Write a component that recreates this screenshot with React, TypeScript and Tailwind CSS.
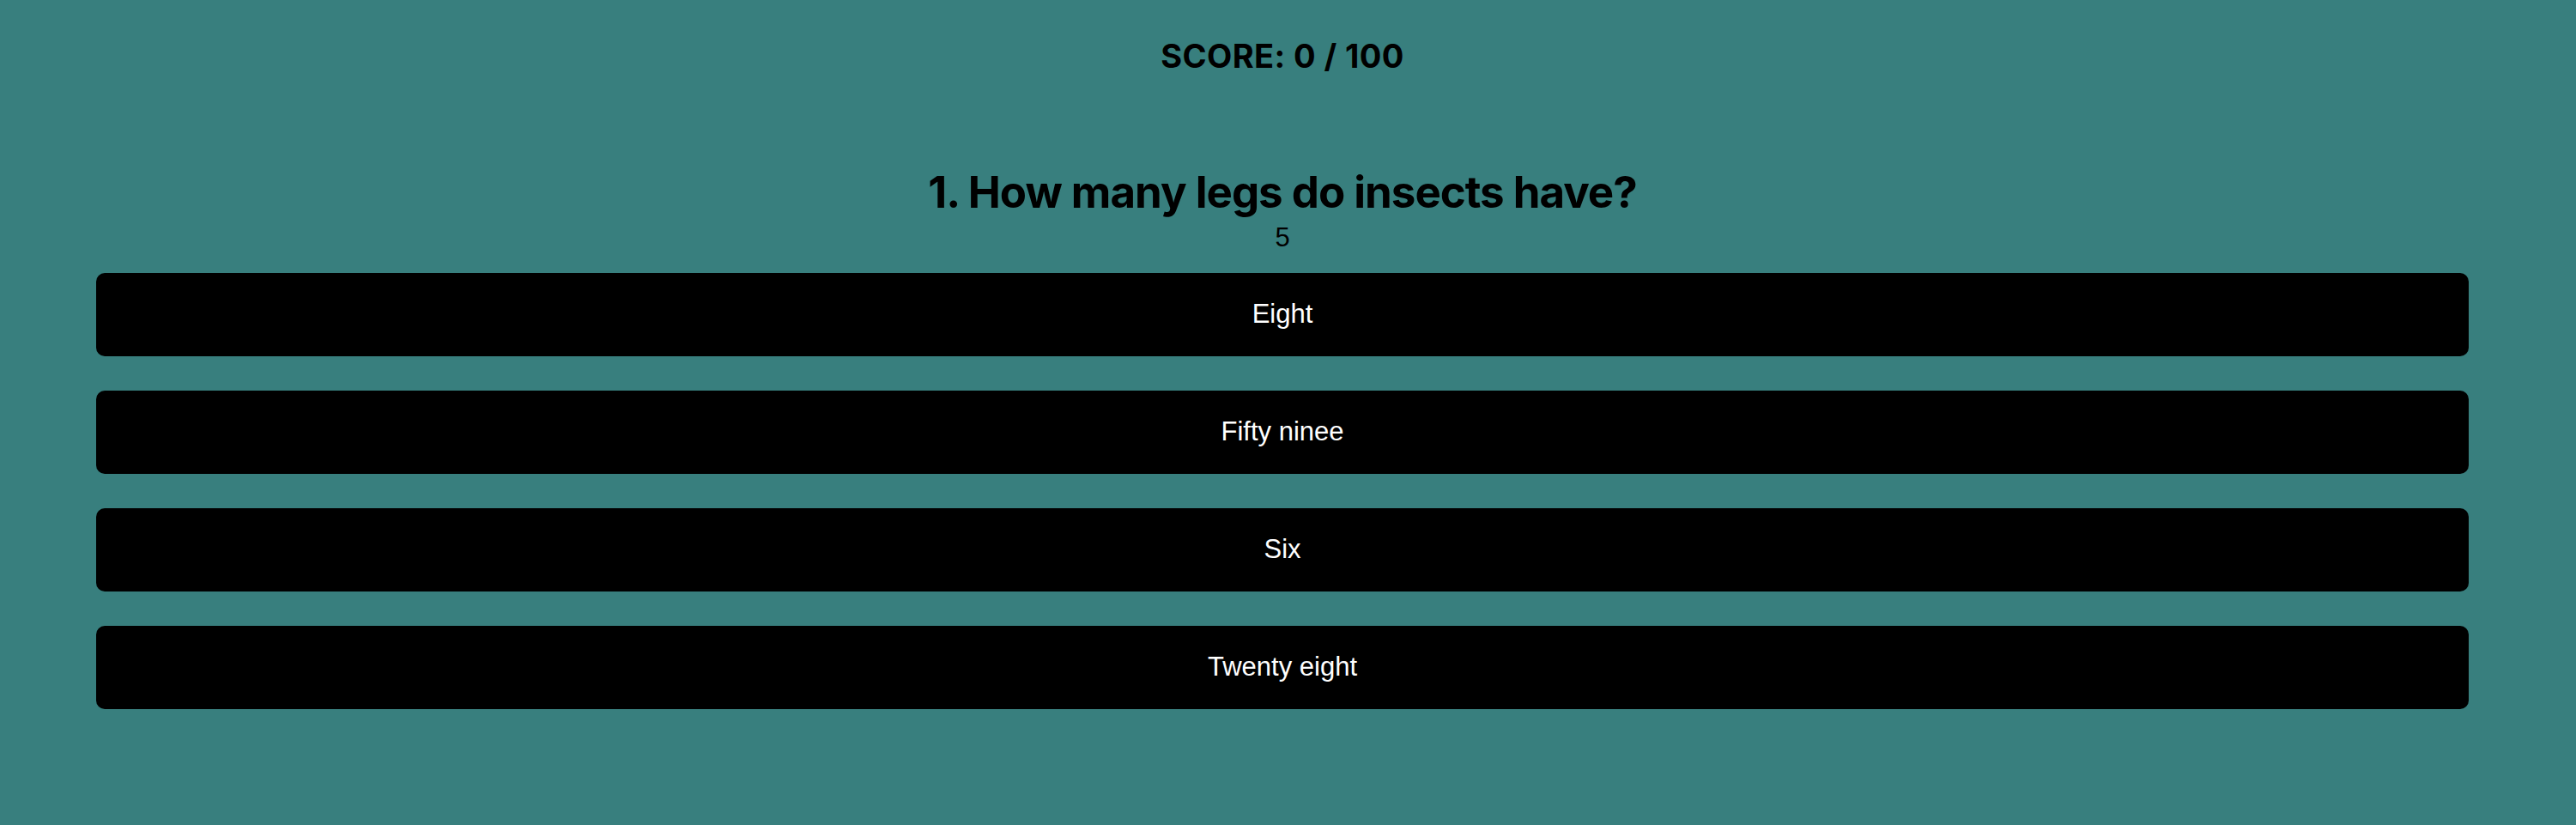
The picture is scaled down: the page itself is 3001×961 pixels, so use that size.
const answers = ['Eight', 'Fifty ninee', 'Six', 'Twenty eight'];

export default function App() {
  return (
    <div className="min-h-[961px] w-full bg-[#387f7e]">
      <div className="ml-[112px] w-[2764px] flex flex-col items-center pt-[46px]">
        <h2 className="text-[38px] leading-none font-bold tracking-[0.4px] text-black" style={{ fontFamily: 'Inter, sans-serif' }}>
          SCORE: 0 / 100
        </h2>
        <h1 className="mt-[114px] text-[51px] leading-none font-bold tracking-[-1px] text-black" style={{ fontFamily: 'Inter, sans-serif' }}>
          1. How many legs do insects have?
        </h1>
        <p className="mt-[12px] text-[31px] leading-none text-black font-['Liberation_Sans',Arial,sans-serif]">5</p>
        <div className="mt-[26px] w-full flex flex-col gap-[40px]">
          {answers.map((a) => (
            <button
              key={a}
              className="h-[97px] w-full rounded-[10px] bg-black text-white text-[31px] font-['Liberation_Sans',Arial,sans-serif] flex items-center justify-center"
            >
              {a}
            </button>
          ))}
        </div>
      </div>
    </div>
  );
}
